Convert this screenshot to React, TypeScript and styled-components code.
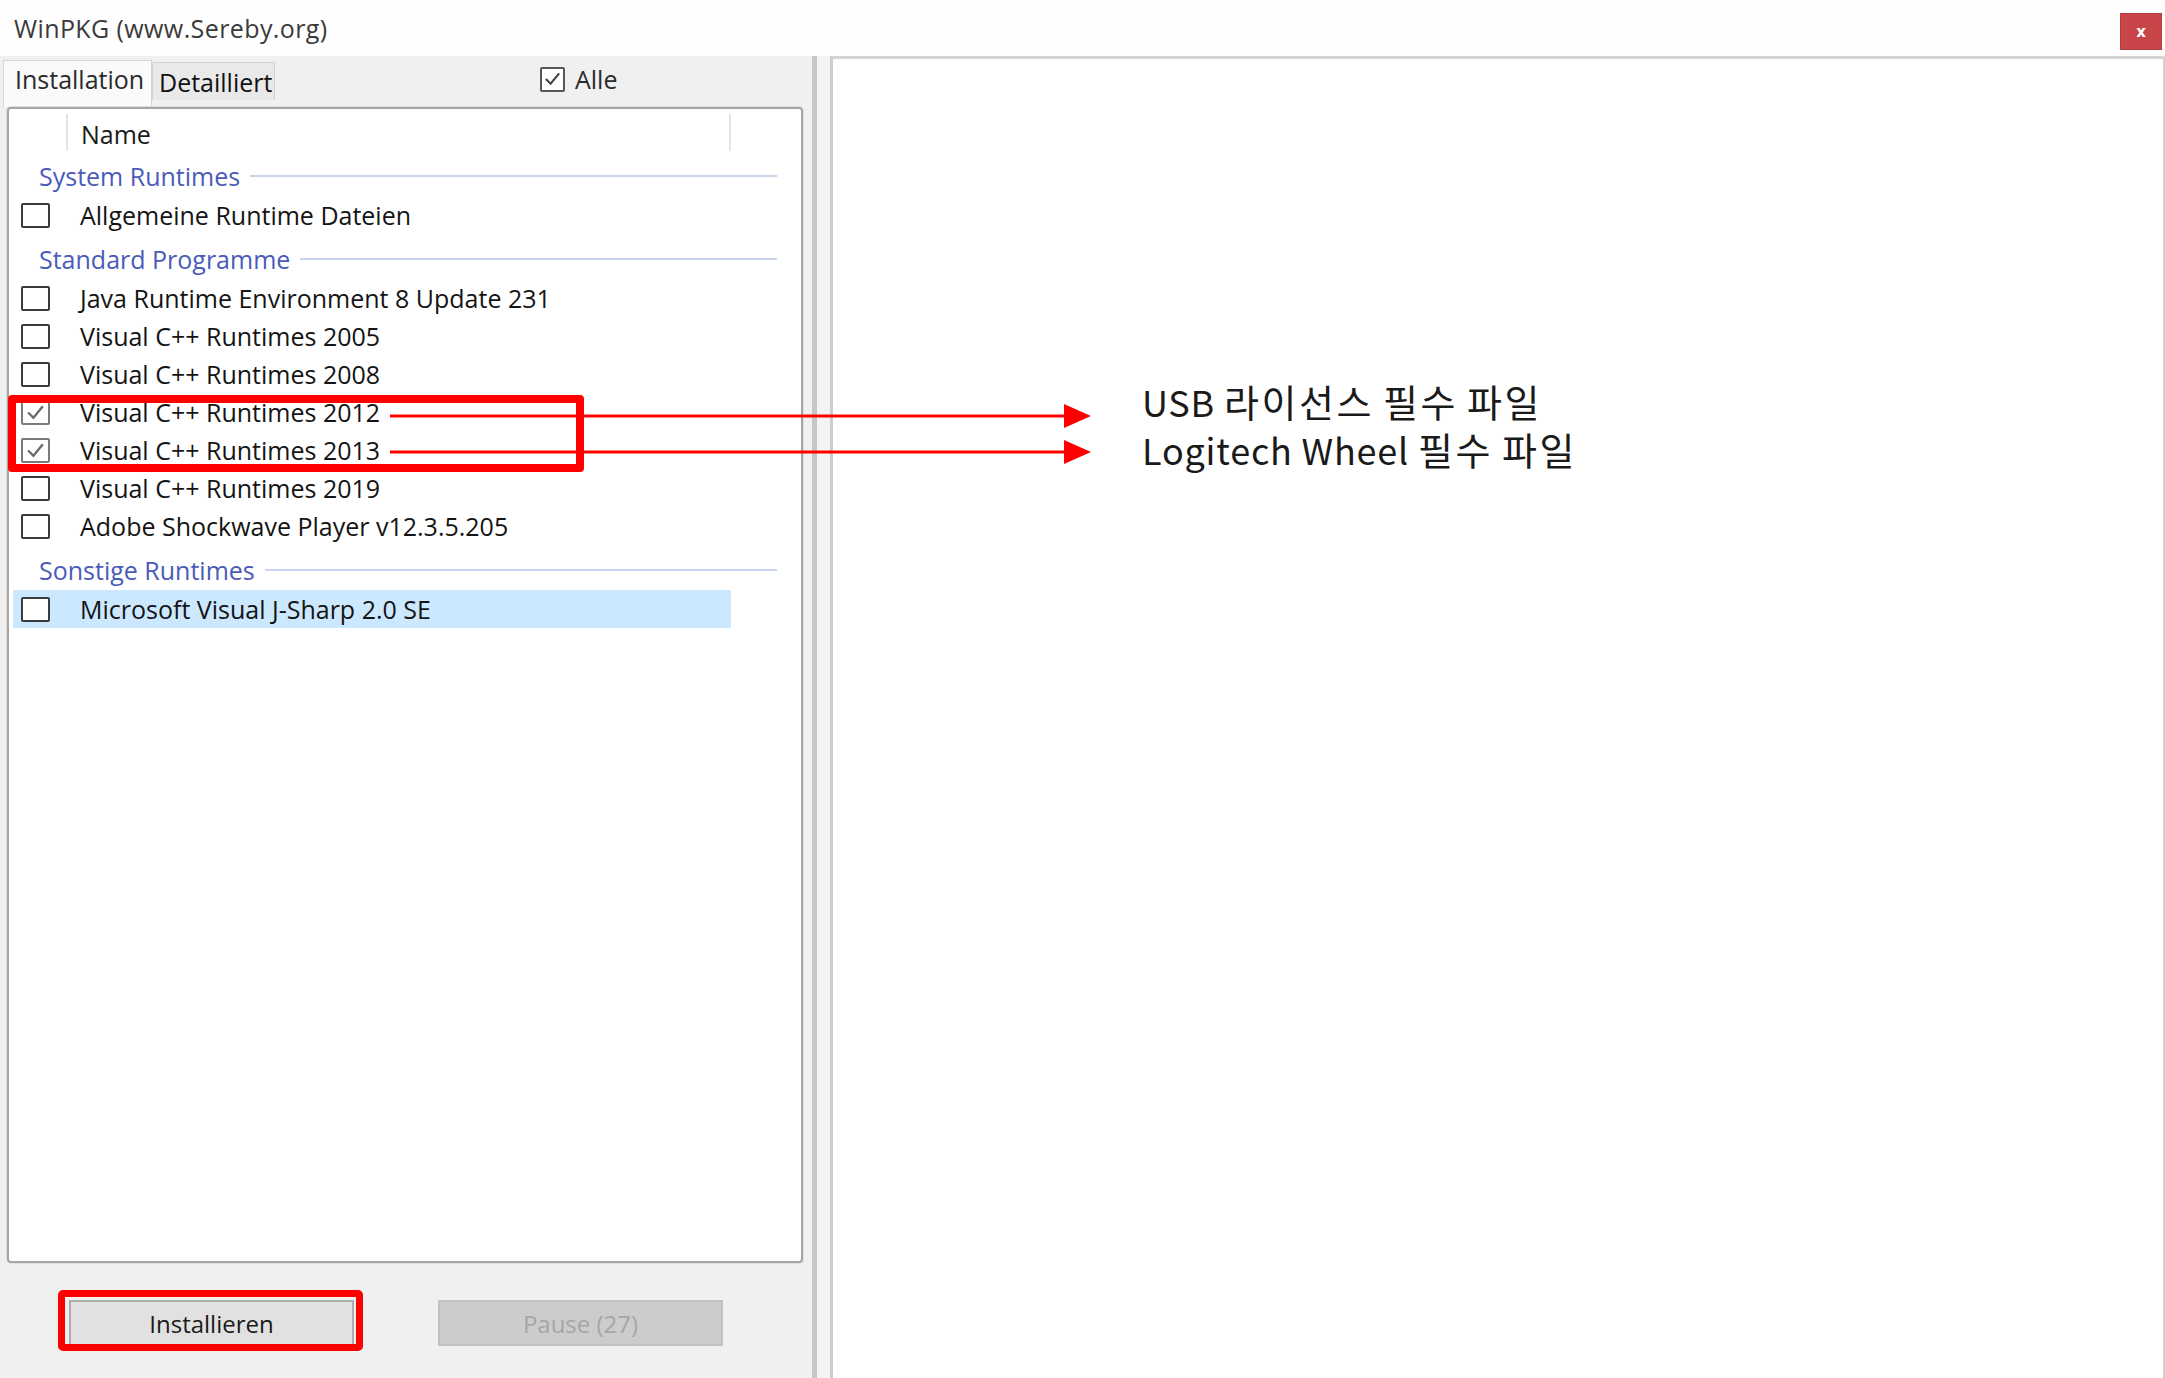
import React from "react";
import styled, { createGlobalStyle } from "styled-components";

const GlobalStyle = createGlobalStyle`
  html, body { margin: 0; padding: 0; background: #ffffff; }
  body { font-family: "Open Sans", "Noto Sans", "Liberation Sans", sans-serif; }
  * { box-sizing: border-box; }
`;

const Window = styled.div`
  position: relative;
  width: 2165px;
  height: 1378px;
  overflow: hidden;
  background: #fefefe;
  display: flex;
  flex-direction: column;
  font-family: "Open Sans", "Noto Sans", "Liberation Sans", sans-serif;
  font-size: 25px;
  color: #1c1c1c;
`;

const TitleBar = styled.div`
  height: 56px;
  flex: none;
  display: flex;
  justify-content: space-between;
  align-items: flex-start;
`;

const Title = styled.div`
  margin: 10px 0 0 14px;
  line-height: 36px;
  font-size: 25px;
  letter-spacing: 0.4px;
  color: #3a3a3a;
`;

const CloseButton = styled.div`
  margin: 13px 3px 0 0;
  width: 42px;
  height: 37px;
  background: #c8464a;
  border: 1px solid #b43b3e;
  color: #ffffff;
  font-family: "DejaVu Sans", sans-serif;
  font-size: 15px;
  font-weight: bold;
  display: flex;
  align-items: center;
  justify-content: center;
`;

const Body = styled.div`
  flex: 1;
  display: flex;
  min-height: 0;
`;

const LeftPanel = styled.div`
  width: 812px;
  flex: none;
  background: #f0f0f0;
  display: flex;
  flex-direction: column;
`;

const TabRow = styled.div`
  height: 51px;
  flex: none;
  display: flex;
  align-items: flex-end;
  padding-left: 3px;
`;

const Tab = styled.div<{ $active?: boolean }>`
  height: ${(p) => (p.$active ? "47px" : "38px")};
  margin-bottom: ${(p) => (p.$active ? "0" : "7px")};
  width: ${(p) => (p.$active ? "149px" : "123px")};
  padding: ${(p) => (p.$active ? "1px 0 0 11px" : "2px 0 0 6px")};
  background: ${(p) => (p.$active ? "#fafafa" : "#e9e9e9")};
  border: 1px solid ${(p) => (p.$active ? "#d6d6d6" : "#d2d2d2")};
  border-bottom: none;
  line-height: 34px;
  color: ${(p) => (p.$active ? "#2a2a2a" : "#111111")};
  white-space: nowrap;
`;

const AlleLabel = styled.div`
  align-self: flex-start;
  margin: 6px 0 0 265px;
  display: flex;
  align-items: center;
  gap: 10px;
  line-height: 34px;
  color: #2a2a2a;
`;

const AlleBox = styled.div`
  width: 25px;
  height: 25px;
  border: 2px solid #575757;
  border-radius: 2px;
  background: #ffffff;
  display: flex;
  align-items: center;
  justify-content: center;
`;

const ListBox = styled.div`
  flex: 1;
  margin: 0 9px 0 7px;
  background: #ffffff;
  border: 2px solid #a6a6a6;
  border-radius: 4px;
  box-shadow: 0 0 0 1px #dedede;
  display: flex;
  flex-direction: column;
  overflow: hidden;
`;

const Header = styled.div`
  height: 42px;
  flex: none;
  display: flex;
`;

const HeaderCell = styled.div<{ $w: number }>`
  width: ${(p) => p.$w}px;
  margin: 5px 0 0 0;
  height: 37px;
  border-right: 2px solid #e4e4e4;
  padding: 3px 0 0 13px;
  line-height: 34px;
  color: #1a1a1a;
`;

const GroupRow = styled.div`
  height: 45px;
  flex: none;
  padding: 4px 24px 0 30px;
  display: flex;
  align-items: center;
`;

const GroupLabel = styled.span`
  color: #4a5bb8;
  line-height: 34px;
  white-space: nowrap;
`;

const GroupLine = styled.div`
  flex: 1;
  height: 2px;
  margin-left: 10px;
  background: #c9d5ee;
`;

const ItemRow = styled.div<{ $selected?: boolean }>`
  height: 38px;
  flex: none;
  width: 718px;
  margin-left: 4px;
  display: flex;
  align-items: center;
  background: ${(p) => (p.$selected ? "#cce8ff" : "transparent")};
`;

const CheckBox = styled.div<{ $checked?: boolean }>`
  width: 29px;
  height: 25px;
  margin-left: 8px;
  flex: none;
  border: 2px solid ${(p) => (p.$checked ? "#7a7a7a" : "#3a3a3a")};
  border-radius: 2px;
  background: #ffffff;
  display: flex;
  align-items: center;
  justify-content: center;
`;

const ItemText = styled.span`
  margin-left: 30px;
  line-height: 34px;
  color: #141414;
  white-space: nowrap;
`;

const ButtonBar = styled.div`
  height: 115px;
  flex: none;
  display: flex;
  align-items: flex-start;
  padding: 37px 0 0 69px;
  gap: 84px;
`;

const ButtonWrap = styled.div`
  position: relative;
`;

const Button = styled.div<{ $disabled?: boolean }>`
  width: 285px;
  height: 46px;
  display: flex;
  align-items: center;
  justify-content: center;
  background: ${(p) => (p.$disabled ? "#cccccc" : "#e1e1e1")};
  border: 2px solid ${(p) => (p.$disabled ? "#c2c2c2" : "#adadad")};
  color: ${(p) => (p.$disabled ? "#a6a6a6" : "#1a1a1a")};
  font-size: 24px;
`;

const RedFrame = styled.div`
  position: absolute;
  top: -10px;
  left: -11px;
  right: -9px;
  bottom: -5px;
  border: 7px solid #ff0000;
  border-radius: 5px;
  pointer-events: none;
`;

const Splitter = styled.div`
  width: 18px;
  flex: none;
  background: #f4f4f4;
  border-left: 5px solid #c6c6c6;
`;

const RightPanel = styled.div`
  flex: 1;
  background: #ffffff;
  border-top: 3px solid #d4d4d4;
  border-left: 3px solid #cdcdcd;
  border-right: 2px solid #d0d0d0;
`;

const RedBox = styled.div`
  position: absolute;
  left: 8px;
  top: 395px;
  width: 576px;
  height: 77px;
  border: 8px solid #ff0000;
  border-radius: 4px;
  pointer-events: none;
`;

const ArrowLayer = styled.svg`
  position: absolute;
  left: 380px;
  top: 395px;
  pointer-events: none;
`;

const Note = styled.div`
  position: absolute;
  left: 1142px;
  top: 377px;
  font-family: "Noto Sans CJK KR", "Noto Sans", sans-serif;
  font-size: 36px;
  line-height: 47px;
  letter-spacing: 0.8px;
  color: #1a1a1a;
  white-space: nowrap;
`;

const Hangul = styled.span`
  font-size: 38px;
  letter-spacing: 2.6px;
`;

type Item = { label: string; checked?: boolean; selected?: boolean };
type Group = { title: string; items: Item[] };

const groups: Group[] = [
  { title: "System Runtimes", items: [{ label: "Allgemeine Runtime Dateien" }] },
  {
    title: "Standard Programme",
    items: [
      { label: "Java Runtime Environment 8 Update 231" },
      { label: "Visual C++ Runtimes 2005" },
      { label: "Visual C++ Runtimes 2008" },
      { label: "Visual C++ Runtimes 2012", checked: true },
      { label: "Visual C++ Runtimes 2013", checked: true },
      { label: "Visual C++ Runtimes 2019" },
      { label: "Adobe Shockwave Player v12.3.5.205" },
    ],
  },
  {
    title: "Sonstige Runtimes",
    items: [{ label: "Microsoft Visual J-Sharp 2.0 SE", selected: true }],
  },
];

const CheckMark = ({ color, w, h }: { color: string; w: number; h: number }) => (
  <svg width={w} height={h} viewBox="0 0 20 16">
    <polyline points="3,8 8,13 17,2" fill="none" stroke={color} strokeWidth="2.2" />
  </svg>
);

export default function App() {
  return (
    <>
      <GlobalStyle />
      <Window>
        <TitleBar>
          <Title>WinPKG (www.Sereby.org)</Title>
          <CloseButton>x</CloseButton>
        </TitleBar>
        <Body>
          <LeftPanel>
            <TabRow>
              <Tab $active>Installation</Tab>
              <Tab>Detailliert</Tab>
              <AlleLabel>
                <AlleBox>
                  <CheckMark color="#444444" w={19} h={16} />
                </AlleBox>
                Alle
              </AlleLabel>
            </TabRow>
            <ListBox>
              <Header>
                <HeaderCell $w={59} />
                <HeaderCell $w={663}>Name</HeaderCell>
              </Header>
              {groups.map((g) => (
                <React.Fragment key={g.title}>
                  <GroupRow>
                    <GroupLabel>{g.title}</GroupLabel>
                    <GroupLine />
                  </GroupRow>
                  {g.items.map((it) => (
                    <ItemRow key={it.label} $selected={it.selected}>
                      <CheckBox $checked={it.checked}>
                        {it.checked && <CheckMark color="#6a6a6a" w={21} h={17} />}
                      </CheckBox>
                      <ItemText>{it.label}</ItemText>
                    </ItemRow>
                  ))}
                </React.Fragment>
              ))}
            </ListBox>
            <ButtonBar>
              <ButtonWrap>
                <Button>Installieren</Button>
                <RedFrame />
              </ButtonWrap>
              <Button $disabled>Pause (27)</Button>
            </ButtonBar>
          </LeftPanel>
          <Splitter />
          <RightPanel />
        </Body>

        <RedBox />
        <ArrowLayer width="720" height="80" viewBox="0 0 720 80">
          <line x1="10" y1="21" x2="690" y2="21" stroke="#ff0000" strokeWidth="3" />
          <polygon points="684,9 711,21 684,33" fill="#ff0000" />
          <line x1="10" y1="57" x2="690" y2="57" stroke="#ff0000" strokeWidth="3" />
          <polygon points="684,45 711,57 684,69" fill="#ff0000" />
        </ArrowLayer>
        <Note>
          <div>
            USB <Hangul>라이선스</Hangul> <Hangul>필수</Hangul> <Hangul>파일</Hangul>
          </div>
          <div>
            Logitech Wheel <Hangul>필수</Hangul> <Hangul>파일</Hangul>
          </div>
        </Note>
      </Window>
    </>
  );
}
